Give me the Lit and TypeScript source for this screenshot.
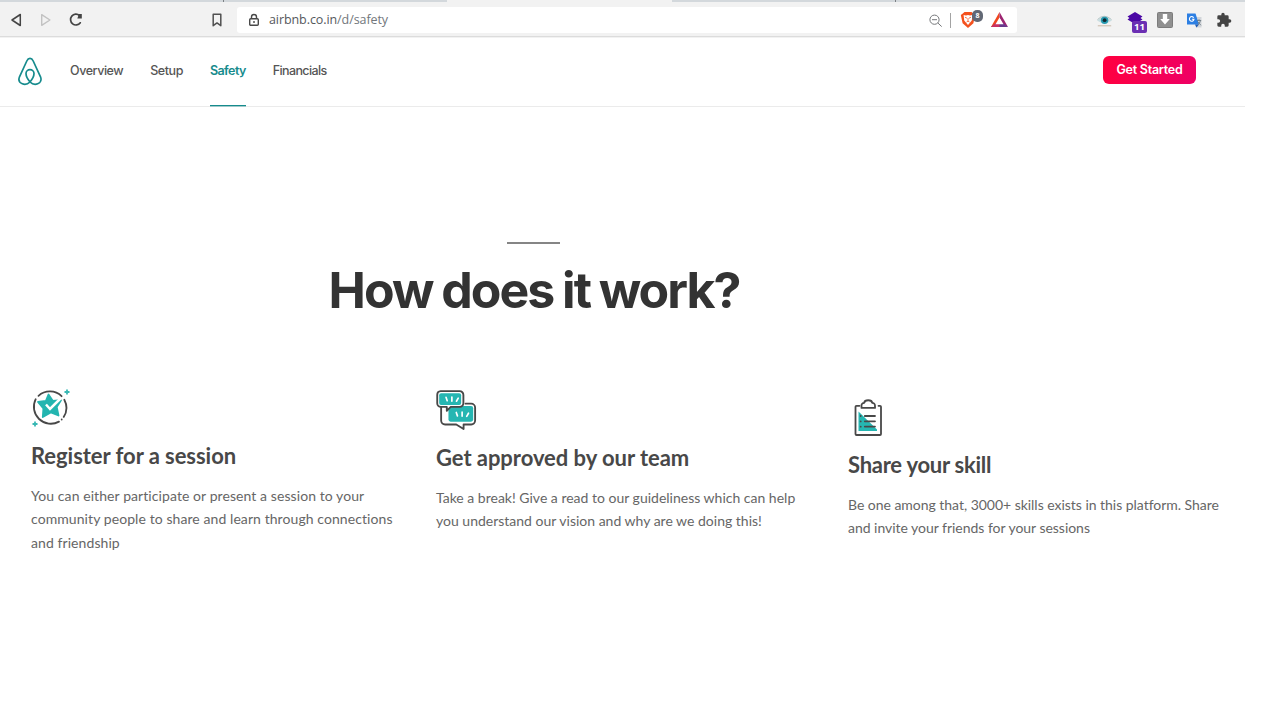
import { LitElement, html, css } from 'lit';
import { customElement } from 'lit/decorators.js';
import { classMap } from 'lit/directives/class-map.js';

const star = html`<svg width="40" height="38" viewBox="0 0 40 38" fill="none">
  <g stroke="#484848" stroke-width="1.8" stroke-linecap="round">
    <path d="M7.500 6.800A16.900 16.900 0 0 1 30.600 7.200M33.300 10.700A16.900 16.900 0 0 1 32.700 27.900"/>
    <path d="M28 32.600A16.900 16.900 0 0 1 4.700 10.200"/><path d="M30.700 30.500v.1"/>
  </g>
  <path d="M17.500 5.500l4.200 6.300 8.300-.6-4.300 6.800 1.800 8.500-7.700-3-8 4.500.6-8.500-5.400-6.500 7.800-1z" fill="#23b5b0" stroke="#23b5b0" stroke-width="1.800" stroke-linejoin="round"/>
  <path d="M15 15.500l4 4.500L30 9" stroke="#fff" stroke-width="2.500"/>
  <path d="M36 .5v5M33.500 3h5M4 32.500v5M1.500 35h5" stroke="#39b8b4" stroke-width="1.800"/>
</svg>`;

const chat = html`<svg width="42" height="41" viewBox="0 0 42.500 42" fill="none">
  <path d="M5 17.500v13.800a4 4 0 0 0 4 4h11.500l7.500 4.600v-4.600h7.800a4 4 0 0 0 4-4V18a4 4 0 0 0-4-4H30" stroke="#484848" stroke-width="1.900" stroke-linecap="round" stroke-linejoin="round"/>
  <rect x="12.500" y="16.500" width="25.300" height="16" rx="2.200" fill="#25b6b2"/>
  <path d="M4.500 1.200H24a3.800 3.800 0 0 1 3.800 3.800v8.500a3.800 3.800 0 0 1-3.800 3.800H14.800l-4 4v-4H4.700A3.800 3.800 0 0 1 1 13.500V5a3.800 3.800 0 0 1 3.500-3.800z" fill="#fff" stroke="#484848" stroke-width="1.900" stroke-linejoin="round"/>
  <rect x="3" y="3.300" width="22.500" height="12" rx="2" fill="#25b6b2"/>
  <path d="M10 7.500l1.200 3.500M16 7.200v4.200M22.500 8.300l-1.800 3.200M20.500 23l1.200 3.500M26.500 22.700v4.200M33 23.800l-1.800 3.200" stroke="#fff" stroke-width="1.700" stroke-linecap="round"/>
</svg>`;

const clipboard = html`<svg width="30" height="38" viewBox="0 0 30 38" fill="none">
  <path d="M4.500 12.500L23 30.500V32H4.500z" fill="#25b6b2"/>
  <g stroke="#484848" stroke-width="1.800" stroke-linecap="round" stroke-linejoin="round">
    <path d="M5.500 6.800H2.500a1 1 0 0 0-1 1V35a1 1 0 0 0 1 1H26a1 1 0 0 0 1-1V7.800a1 1 0 0 0-1-1h-1.500"/>
    <path d="M7.500 8.900V7a2.800 2.800 0 0 1 2.700-3.200c.5-3.400 7.500-3.400 8 0A2.800 2.800 0 0 1 21 7v1.900z"/>
    <path d="M10.800 17H21M10.800 22.300H21M10.800 27.600H21M6.700 17v.1M6.700 22.300v.1M6.700 27.600v.1"/>
  </g>
</svg>`;

@customElement('browser-bar')
export class BrowserBar extends LitElement {
  static styles = css`
    :host { display: block; }
    .tabs { display: grid; grid-template-columns: 223px 1px 223px 225px 223px 1px 1fr; height: 2px; background: #d3d8dc; }
    .tick { background: #7c8084; }
    .active { background: #f2f2f2; }
    .bar { display: flex; align-items: center; height: 35px; box-sizing: border-box; background: #f2f2f2; border-bottom: 1px solid #dcdcdc; padding: 2px 0 0 9px; }
    .edge { height: 1px; background: #f2f2f2; }
    svg { display: block; flex: none; }
    .fwd { margin-left: 15px; }
    .reload { margin-left: 15px; }
    .mark { margin-left: 125px; }
    .address { display: flex; align-items: center; box-sizing: border-box; width: 780px; height: 26px; margin-left: 12px; padding-left: 10px; background: #fff; border-radius: 3px; }
    .url { flex: none; margin-left: 8px; font: 12.500px/18px "Open Sans", sans-serif; color: #72777c; width: 647px; letter-spacing: -.08px; }
    .host { color: #55585c; }
    .zoom { margin-left: 12px; }
    .rule { flex: none; width: 1px; height: 15px; background: #a3a3a3; margin: 0 9px 0 7px; }
    .shield { flex: none; position: relative; width: 23px; height: 20px; }
    .count { position: absolute; left: 12px; top: 0; width: 11px; height: 12px; border-radius: 5px; background: #626875; color: #fff; font: 700 7px/12px "Open Sans", sans-serif; text-align: center; }
    .bat { margin-left: 8px; }
    .ext { display: flex; align-items: center; gap: 14px; margin-left: 80px; }
    .stack { position: relative; width: 17px; height: 20px; }
    .badge { position: absolute; left: 6px; top: 11px; width: 15px; height: 12px; border-radius: 2px; background: #6b2fb3; color: #fff; font: 700 9.500px/12px "Open Sans", sans-serif; text-align: center; }
    .stack svg { margin-left: 1px; }
  `;

  render() {
    return html`
      <div class="tabs"><i></i><i class="tick"></i><i></i><i class="active"></i><i></i><i class="tick"></i><i></i></div>
      <div class="bar">
        <svg width="15" height="14" viewBox="0 0 15 14"><path d="M11.300 1.500v11L3 7z" fill="none" stroke="#444" stroke-width="1.500" stroke-linejoin="round"/></svg>
        <svg class="fwd" width="15" height="14" viewBox="0 0 15 14"><path d="M2.700 1.700v10.600L10.900 7z" fill="none" stroke="#c2c2c2" stroke-width="1.400" stroke-linejoin="round"/></svg>
        <svg class="reload" width="15" height="14" viewBox="0 0 15 14"><path d="M10.500 2.500A5.400 5.400 0 1 0 11.300 9.800" fill="none" stroke="#444" stroke-width="1.700" stroke-linecap="round"/><path d="M12.800 1v4.600H8.300L10 1z" fill="#444"/></svg>
        <svg class="mark" width="16" height="16" viewBox="0 0 16 16"><path d="M4.200 2.200h7.600v11.500L8 10.900l-3.800 2.800z" fill="none" stroke="#505050" stroke-width="1.500" stroke-linejoin="round"/></svg>
        <div class="address">
          <svg width="14" height="14" viewBox="0 0 14 14" fill="none" stroke="#484848" stroke-width="1.400"><rect x="2.700" y="5.700" width="8.600" height="6.500" rx="1"/><path d="M4.500 5.500V4a2.500 2.500 0 0 1 5 0v1.500M7 8v2"/></svg>
          <div class="url"><span class="host">airbnb.co.in</span>/d/safety</div>
          <svg class="zoom" width="15" height="15" viewBox="0 0 15 15" fill="none" stroke="#75777a"><circle cx="6.500" cy="6.700" r="4.600"/><path d="M4 6.700h5M9.900 10l3.800 3.600"/></svg>
          <div class="rule"></div>
          <div class="shield">
            <svg width="16" height="20" viewBox="0 0 16 20"><path d="M4.500 2h7l1.800 1.500L15 5l-1.600 8.200L8 18l-5.400-4.800L.8 5l2-1.600z" fill="#f4511e"/><path d="M3.600 5l2.400.6L8 5l2 .6 2.400-.6-.6 5.500L8 15l-3.800-4.500z" fill="#fff"/><path d="M5 7.200l2 1M11 7.200l-2 1M8 8v3M6.500 12L8 11.200l1.500.8" fill="none" stroke="#f4511e" stroke-width=".8"/></svg>
            <span class="count">8</span>
          </div>
          <svg class="bat" width="17" height="16" viewBox="0 0 17 16"><path d="M8.500 0L0 15h5l3.500-9z" fill="#f1461d"/><path d="M8.500 0L17 15l-5-2.500L8.500 6z" fill="#9d2471"/><path d="M0 15h17l-4.500-3.500h-8z" fill="#69398d"/><path d="M0 15L4.200 11.500 8.500 12v3z" fill="#c83162"/><path d="M8.500 5.500l4 6.700h-8z" fill="#fff"/></svg>
        </div>
        <div class="ext">
          <svg width="15" height="15" viewBox="0 0 15 15"><path d="M.8 12.800h13.400" stroke="#c9b9a8"/><path d="M0 7.500Q7 .5 15 7.500 7.500 13 0 7.500z" fill="#c8dde1"/><circle cx="7.600" cy="7.200" r="3.700" fill="#269ab1"/><circle cx="7.600" cy="7.200" r="1.900" fill="#102731"/><path d="M.5 6.500Q7 0 14.500 6.500" fill="none" stroke="#9fb7b9" stroke-width=".8"/></svg>
          <div class="stack">
            <svg width="16" height="16" viewBox="0 0 16 16"><path d="M8 2l7.500 4.600-2 1.400 2 1.500L8 14 .5 9.500l2-1.500-2-1.400z" fill="#4b08a5"/></svg>
            <span class="badge">11</span>
          </div>
          <svg width="16" height="16" viewBox="0 0 16 16"><rect x=".5" y=".5" width="15" height="15" rx="1" fill="#909090" stroke="#7c7c7c"/><path d="M5.800 2h4.400v5h2.600L8 12.500 3.200 7h2.600z" fill="#fff"/></svg>
          <svg width="15" height="15" viewBox="0 0 15 15"><path d="M6 4h8.500v10.500H9z" fill="#d2d5d9"/><path d="M0 .5h8.500L12 11.500H0z" fill="#2c7fe3"/><path d="M8 11.500h4l-2.500 3z" fill="#1b5bb8"/><path d="M6.700 4.700A2.300 2.300 0 1 0 7 6.200H4.900" fill="none" stroke="#fff" stroke-width="1.100"/><path d="M10 7.500h4.200M12 6.200v1.300M13.500 7.500q-.6 3-3 4.500M10.800 8.800l3.200 3.500" fill="none" stroke="#66737e" stroke-width=".8"/></svg>
          <svg width="16" height="16" viewBox="0 0 24 24"><path d="M20.500 11H19V7a2 2 0 0 0-2-2h-4V3.500a2.500 2.500 0 0 0-5 0V5H4a2 2 0 0 0-2 2v3.800h1.500a2.700 2.700 0 0 1 0 5.400H2V20a2 2 0 0 0 2 2h3.800v-1.500a2.700 2.700 0 0 1 5.400 0V22H17a2 2 0 0 0 2-2v-4h1.500a2.500 2.500 0 0 0 0-5z" fill="#444"/></svg>
        </div>
      </div>
      <div class="edge"></div>`;
  }
}

@customElement('site-header')
export class SiteHeader extends LitElement {
  static styles = css`
    :host { display: block; font-family: Inter, sans-serif; }
    .row { display: flex; align-items: flex-start; height: 69px; border-bottom: 1px solid #ebebeb; box-sizing: border-box; padding: 0 49px 0 17px; }
    .logo { display: block; margin-top: 19px; }
    nav { display: flex; gap: 27px; margin-left: 27px; height: 100%; }
    .link { box-sizing: border-box; height: 68px; padding-top: 24px; font-size: 12.500px; line-height: 18px; font-weight: 500; letter-spacing: -.44px; color: #555; white-space: nowrap; }
    .link:last-child { letter-spacing: -.62px; }
    .on { color: #168b8d; border-bottom: 1px solid #168b8d; box-shadow: 0 1px 0 rgba(22, 139, 141, .35); font-weight: 600; letter-spacing: -.57px; }
    .cta { margin: 18px 0 0 auto; width: 93px; height: 28px; border: 0; padding: 0 0 1px; border-radius: 6px; background: linear-gradient(100deg, #ff003f, #ee0066); color: #fff; font: 600 12.500px/27px Inter, sans-serif; letter-spacing: -.25px; }
  `;

  render() {
    return html`<div class="row">
      <svg class="logo" width="26" height="29" viewBox="0 0 26 29" fill="none" stroke="#168b8d" stroke-width="1.700">
        <path d="M13 25C9.800 21.300 9 19 9 16.600a4 4 0 0 1 8 0C17 19 16.200 21.300 13 25c-2.300 2.200-5.300 2.700-7.700 1.800-3-1.200-4-4-2.800-7L9.800 4C10.700 2 11.600 1.400 13 1.400s2.300.6 3.200 2.600l7.300 15.800c1.200 3 .2 5.800-2.800 7-2.400.9-5.400.4-7.700-1.800z"/>
      </svg>
      <nav>${['Overview', 'Setup', 'Safety', 'Financials'].map(
        (name) => html`<div class=${classMap({ link: true, on: name === 'Safety' })}>${name}</div>`,
      )}</nav>
      <button class="cta">Get Started</button>
    </div>`;
  }
}

const steps = [
  { cls: 'a', icon: star, title: 'Register for a session', lines: ['You can either participate or present a session to your', 'community people to share and learn through connections', 'and friendship'] },
  { cls: 'b', icon: chat, title: 'Get approved by our team', lines: ['Take a break! Give a read to our guideliness which can help', 'you understand our vision and why are we doing this!'] },
  { cls: 'c', icon: clipboard, title: 'Share your skill', lines: ['Be one among that, 3000+ skills exists in this platform. Share', 'and invite your friends for your sessions'] },
];

@customElement('app-root')
export class AppRoot extends LitElement {
  static styles = css`
    :host { display: block; height: 719px; overflow: hidden; background: #fff; }
    .page { width: 1245px; }
    .intro { display: flex; flex-direction: column; align-items: center; width: 1067px; padding-top: 135px; }
    .dash { width: 53px; height: 2px; background: #858585; }
    h1 { margin: 16px 0 0; padding-left: 1px; font: 650 50px/60px Inter, sans-serif; letter-spacing: -2px; word-spacing: -1px; color: #333; white-space: nowrap; }
    .steps { display: grid; grid-template-columns: 405px 412px auto; padding: 68px 0 0 31px; }
    .step svg { display: block; }
    .a svg { margin-top: 1px; }
    .b svg { margin-top: 2px; }
    .c { padding-top: 11px; }
    .c svg { margin-left: 6px; }
    h2 { margin: 13px 0 0; font: 700 22px/30px Lato, sans-serif; letter-spacing: -.05px; color: #484848; white-space: nowrap; }
    p { margin: 13px 0 0; font: 14px/23.400px Lato, sans-serif; font-variant-ligatures: none; color: #666; white-space: nowrap; }
    .a h2 { margin-top: 14px; }
    .b h2 { margin-top: 12px; }
    .c h2 { letter-spacing: -.25px; }
    .a p { letter-spacing: .08px; }
    .c p { letter-spacing: -.03px; }
  `;

  render() {
    return html`<div class="page">
      <browser-bar></browser-bar>
      <site-header></site-header>
      <div class="intro"><div class="dash"></div><h1>How does it work?</h1></div>
      <div class="steps">${steps.map(
        (s) => html`<section class="step ${s.cls}">${s.icon}<h2>${s.title}</h2><p>${s.lines.map((l) => html`${l}<br />`)}</p></section>`,
      )}</div>
    </div>`;
  }
}
